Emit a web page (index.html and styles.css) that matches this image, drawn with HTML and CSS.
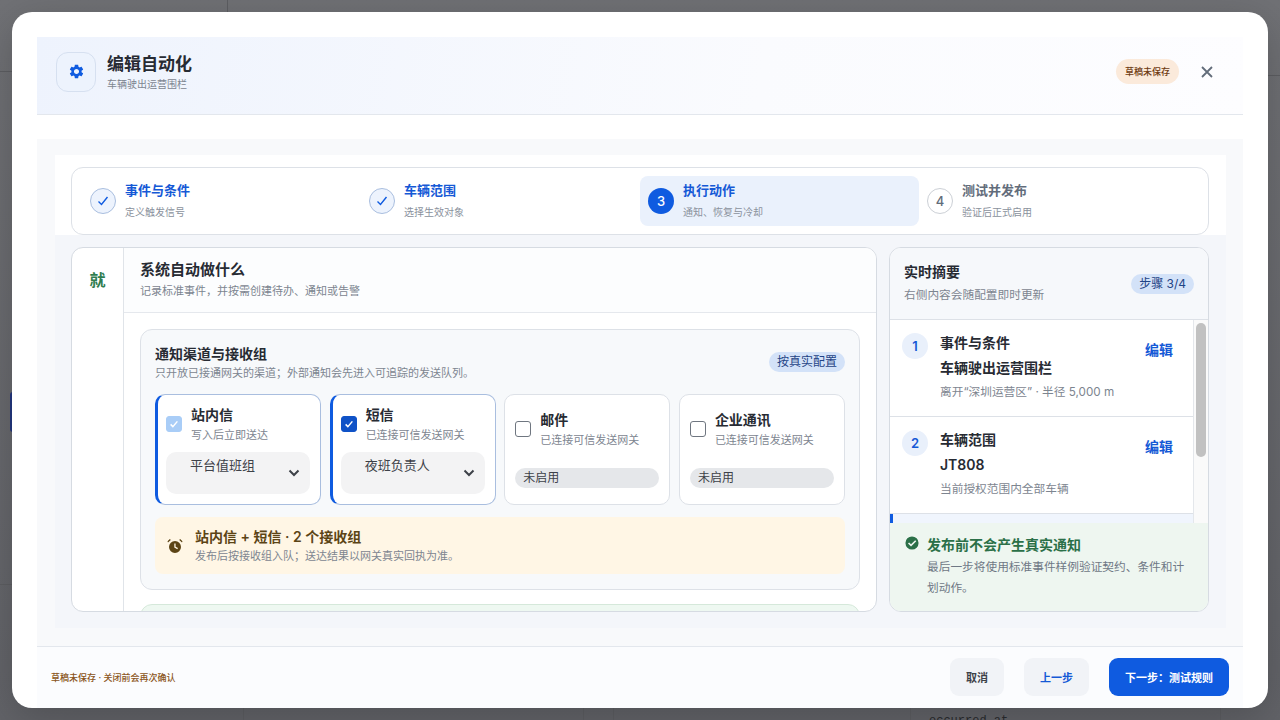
FILE: index.html
```html
<!DOCTYPE html>
<html lang="zh">
<head>
    <meta charset="UTF-8">
    <meta name="viewport" content="width=device-width, initial-scale=1.0">
    <title>编辑自动化</title>
    <link rel="stylesheet" href="styles.css">
</head>
<body>
    <!-- Page behind the dialog -->
    <div class="backdrop">
        <div class="bg-line-v bg-top-227"></div>
        <div class="bg-line-h bg-left-71"></div>
        <div class="bg-line-h bg-left-584"></div>
        <div class="bg-line-h bg-right-75"></div>
        <div class="bg-line-v bg-bottom bg-x-243"></div>
        <div class="bg-line-v bg-bottom bg-x-583"></div>
        <div class="bg-line-v bg-bottom bg-x-613"></div>
        <div class="bg-line-v bg-bottom bg-x-910"></div>
        <div class="bg-line-v bg-bottom bg-x-1220"></div>
        <div class="bg-nav-active"></div>
        <div class="bg-code">occurred_at</div>
    </div>

    <div class="modal">
        <div class="modal-inner">
            <div class="modal-header">
                <div class="header-icon">
                    <svg viewBox="0 0 24 24" width="17" height="17"><path fill="#0f5be0" d="M19.14 12.94c.04-.3.06-.61.06-.94 0-.32-.02-.64-.07-.94l2.03-1.58c.18-.14.23-.41.12-.61l-1.92-3.32c-.12-.22-.37-.29-.59-.22l-2.39.96c-.5-.38-1.03-.7-1.62-.94l-.36-2.54c-.04-.24-.24-.41-.48-.41h-3.84c-.24 0-.43.17-.47.41l-.36 2.54c-.59.24-1.13.57-1.62.94l-2.39-.96c-.22-.08-.47 0-.59.22L2.74 8.87c-.12.21-.08.47.12.61l2.03 1.58c-.05.3-.09.63-.09.94s.02.64.07.94l-2.03 1.58c-.18.14-.23.41-.12.61l1.92 3.32c.12.22.37.29.59.22l2.39-.96c.5.38 1.03.7 1.62.94l.36 2.54c.05.24.24.41.48.41h3.84c.24 0 .44-.17.47-.41l.36-2.54c.59-.24 1.13-.56 1.62-.94l2.39.96c.22.08.47 0 .59-.22l1.92-3.32c.12-.22.07-.47-.12-.61l-2.01-1.58zM12 15.6c-1.98 0-3.6-1.62-3.6-3.6s1.62-3.6 3.6-3.6 3.6 1.62 3.6 3.6-1.62 3.6-3.6 3.6z"/></svg>
                </div>
                <div class="header-text">
                    <h1>编辑自动化</h1>
                    <p>车辆驶出运营围栏</p>
                </div>
                <span class="draft-pill">草稿未保存</span>
                <svg class="close-icon" viewBox="0 0 14 14" width="14" height="14"><path d="M2 2l10 10M12 2L2 12" stroke="#626c7a" stroke-width="1.800" fill="none"/></svg>
            </div>

            <div class="modal-body">
                <div class="body-inner">
                    <div class="steps-wrap">
                        <div class="steps">
                            <div class="step done">
                                <span class="step-dot"><svg viewBox="0 0 16 16" width="16" height="16"><path d="M3.500 8.500l3 3 6-7.500" stroke="#0f5be0" stroke-width="1.400" fill="none"/></svg></span>
                                <div><h4>事件与条件</h4><p>定义触发信号</p></div>
                            </div>
                            <div class="step done">
                                <span class="step-dot"><svg viewBox="0 0 16 16" width="16" height="16"><path d="M3.500 8.500l3 3 6-7.500" stroke="#0f5be0" stroke-width="1.400" fill="none"/></svg></span>
                                <div><h4>车辆范围</h4><p>选择生效对象</p></div>
                            </div>
                            <div class="step active">
                                <span class="step-dot">3</span>
                                <div><h4>执行动作</h4><p>通知、恢复与冷却</p></div>
                            </div>
                            <div class="step todo">
                                <span class="step-dot">4</span>
                                <div><h4>测试并发布</h4><p>验证后正式启用</p></div>
                            </div>
                        </div>
                    </div>

                    <div class="columns">
                        <div class="editor">
                            <div class="editor-tag">就</div>
                            <div class="editor-main">
                                <div class="editor-head">
                                    <h2>系统自动做什么</h2>
                                    <p>记录标准事件，并按需创建待办、通知或告警</p>
                                </div>
                                <div class="editor-content">
                                    <div class="section-card">
                                        <div class="section-head">
                                            <div>
                                                <h3>通知渠道与接收组</h3>
                                                <p>只开放已接通网关的渠道；外部通知会先进入可追踪的发送队列。</p>
                                            </div>
                                            <span class="tag-blue">按真实配置</span>
                                        </div>
                                        <div class="channels">
                                            <div class="channel on">
                                                <div class="channel-top">
                                                    <span class="check locked"><svg viewBox="0 0 16 16" width="12" height="12"><path d="M3.500 8.500l3 3 6-7" stroke="#fff" stroke-width="2" fill="none"/></svg></span>
                                                    <div><h5>站内信</h5><p>写入后立即送达</p></div>
                                                </div>
                                                <div class="select-box">
                                                    <span>平台值班组</span>
                                                    <svg viewBox="0 0 12 8" width="12" height="8"><path d="M1.500 1.500L6 6l4.500-4.500" stroke="#3d4148" stroke-width="2" fill="none"/></svg>
                                                </div>
                                            </div>
                                            <div class="channel on">
                                                <div class="channel-top">
                                                    <span class="check checked"><svg viewBox="0 0 16 16" width="12" height="12"><path d="M3.500 8.500l3 3 6-7" stroke="#fff" stroke-width="2" fill="none"/></svg></span>
                                                    <div><h5>短信</h5><p>已连接可信发送网关</p></div>
                                                </div>
                                                <div class="select-box">
                                                    <span>夜班负责人</span>
                                                    <svg viewBox="0 0 12 8" width="12" height="8"><path d="M1.500 1.500L6 6l4.500-4.500" stroke="#3d4148" stroke-width="2" fill="none"/></svg>
                                                </div>
                                            </div>
                                            <div class="channel">
                                                <div class="channel-top">
                                                    <span class="check"></span>
                                                    <div><h5>邮件</h5><p>已连接可信发送网关</p></div>
                                                </div>
                                                <div class="off-pill">未启用</div>
                                            </div>
                                            <div class="channel">
                                                <div class="channel-top">
                                                    <span class="check"></span>
                                                    <div><h5>企业通讯</h5><p>已连接可信发送网关</p></div>
                                                </div>
                                                <div class="off-pill">未启用</div>
                                            </div>
                                        </div>
                                        <div class="notice">
                                            <svg viewBox="0 0 16 16" width="16" height="16"><path fill="#5c4415" fill-rule="evenodd" d="M8 3a6 6 0 1 1 0 12A6 6 0 0 1 8 3zm-.7 2.500v4l3 1.700.7-1.100-2.400-1.400V5.500z"/><path fill="#5c4415" d="M1 4.600L3.800 2 2.900 1 .5 3.200zM15 4.600L12.200 2l.9-1 2.400 2.200z"/></svg>
                                            <div>
                                                <h4>站内信 + 短信 · 2 个接收组</h4>
                                                <p>发布后按接收组入队；送达结果以网关真实回执为准。</p>
                                            </div>
                                        </div>
                                    </div>
                                    <div class="section-card green"></div>
                                </div>
                            </div>
                        </div>

                        <div class="summary">
                            <div class="summary-head">
                                <div class="summary-title">
                                    <h3>实时摘要</h3>
                                    <p>右侧内容会随配置即时更新</p>
                                </div>
                                <span class="tag-blue">步骤 3/4</span>
                            </div>
                            <div class="summary-list">
                                <div class="summary-rows">
                                    <div class="summary-row">
                                        <span class="num">1</span>
                                        <div class="row-text">
                                            <h4>事件与条件</h4>
                                            <strong>车辆驶出运营围栏</strong>
                                            <p>离开“深圳运营区” · 半径 5,000 m</p>
                                        </div>
                                        <a class="edit-link">编辑</a>
                                    </div>
                                    <div class="summary-row">
                                        <span class="num">2</span>
                                        <div class="row-text">
                                            <h4>车辆范围</h4>
                                            <strong>JT808</strong>
                                            <p>当前授权范围内全部车辆</p>
                                        </div>
                                        <a class="edit-link">编辑</a>
                                    </div>
                                    <div class="summary-row current"></div>
                                </div>
                                <div class="scrollbar"><div class="scroll-thumb"></div></div>
                            </div>
                            <div class="summary-foot">
                                <svg viewBox="0 0 16 16" width="16" height="16"><path fill="#2b7048" fill-rule="evenodd" d="M8 .5a7.500 7.500 0 1 1 0 15 7.500 7.500 0 0 1 0-15zm3.600 4.300L6.900 9.500 4.700 7.300 3.400 8.600l3.500 3.500 6-6z"/></svg>
                                <div>
                                    <h4>发布前不会产生真实通知</h4>
                                    <p>最后一步将使用标准事件样例验证契约、条件和计划动作。</p>
                                </div>
                            </div>
                        </div>
                    </div>
                </div>
            </div>

            <div class="modal-footer">
                <span class="footer-note">草稿未保存 · 关闭前会再次确认</span>
                <div class="footer-buttons">
                    <button class="btn">取消</button>
                    <button class="btn btn-back">上一步</button>
                    <button class="btn btn-next">下一步：测试规则</button>
                </div>
            </div>
        </div>
    </div>
</body>
</html>
```
FILE: styles.css
```css
* {
    box-sizing: border-box;
}
html, body {
    margin: 0;
    height: 100%;
    overflow: hidden;
}
body {
    font-family: Inter, "Noto Sans CJK SC", sans-serif;
    background-color: #6c6d71;
    color: #272b33;
}
h1, h2, h3, h4, h5, p {
    margin: 0;
}
.backdrop {
    position: absolute;
    inset: 0;
    background: linear-gradient(#707175, #626368);
}
.bg-line-v {
    position: absolute;
    width: 1px;
    background-color: #5d5e62;
}
.bg-line-h {
    position: absolute;
    height: 1px;
    background-color: #5d5e62;
}
.bg-top-227 {
    left: 227px;
    top: 0;
    height: 12px;
}
.bg-left-71 {
    left: 0;
    width: 12px;
    top: 71px;
}
.bg-left-584 {
    left: 0;
    width: 12px;
    top: 584px;
}
.bg-right-75 {
    right: 0;
    width: 12px;
    top: 75px;
}
.bg-bottom {
    top: 708px;
    height: 12px;
}
.bg-x-243 { left: 243px; }
.bg-x-583 { left: 583px; }
.bg-x-613 { left: 613px; }
.bg-x-910 { left: 910px; }
.bg-x-1220 { left: 1220px; }
.bg-nav-active {
    position: absolute;
    left: 10px;
    top: 392px;
    width: 6px;
    height: 40px;
    border-radius: 4px;
    background-color: #23377f;
}
.bg-code {
    position: absolute;
    left: 929px;
    top: 714px;
    font-family: "Liberation Mono", monospace;
    font-size: 12px;
    color: #2a2b2e;
}

/* dialog */
.modal {
    position: absolute;
    left: 12px;
    top: 12px;
    width: 1256px;
    height: 696px;
    padding: 25px 25px 0;
    background-color: #fff;
    border-radius: 20px;
    box-shadow: 0 10px 40px rgba(0, 0, 0, 0.2);
}
.modal-inner {
    display: flex;
    flex-direction: column;
    height: 100%;
}
.modal-header {
    display: flex;
    align-items: center;
    height: 78px;
    padding: 0 29px 8px 19px;
    background: linear-gradient(100deg, #eef3fd 0%, #fafbfe 60%, #fdfdff 100%);
    border-bottom: 1px solid #e3e7ed;
}
.header-icon {
    display: flex;
    align-items: center;
    justify-content: center;
    width: 40px;
    height: 40px;
    border: 1px solid #d6e0f0;
    border-radius: 12px;
    background-color: #edf3fd;
}
.header-text {
    flex: 1;
    margin-left: 11px;
}
.header-text h1 {
    font-size: 17px;
    line-height: 24px;
    font-weight: 600;
    color: #272b33;
}
.header-text p {
    margin-top: 1px;
    font-size: 10px;
    line-height: 14px;
    color: #7d8590;
}
.draft-pill {
    padding: 0 9px;
    height: 25px;
    line-height: 25px;
    border-radius: 13px;
    font-size: 9px;
    font-weight: 500;
    color: #6e3a12;
    background-color: #fbeadb;
}
.close-icon {
    margin-left: 21px;
}
.modal-body {
    height: 507px;
    margin-top: 24px;
    padding: 16px 17px 18px 18px;
    background-color: #f8f9fb;
}
.body-inner {
    display: flex;
    flex-direction: column;
    height: 100%;
    background-color: #f4f6fa;
}
.steps-wrap {
    margin-bottom: 12px;
    padding: 12px 17px 0 16px;
    background-color: #fff;
}
.steps {
    display: grid;
    grid-template-columns: repeat(4, 1fr);
    height: 68px;
    padding: 8px 10px;
    background-color: #fff;
    border: 1px solid #dde1e7;
    border-radius: 12px;
}
.step {
    display: flex;
    align-items: center;
    gap: 9px;
    padding: 0 8px;
    border-radius: 8px;
}
.step h4 {
    margin-top: -2px;
    font-size: 13px;
    line-height: 18px;
    font-weight: 600;
    color: #1559d6;
}
.step p {
    margin-top: 6px;
    font-size: 10px;
    line-height: 14px;
    color: #8a919c;
}
.step-dot {
    display: flex;
    align-items: center;
    justify-content: center;
    flex: none;
    width: 26px;
    height: 26px;
    border-radius: 50%;
    font-size: 13px;
    font-weight: 500;
}
.step.done .step-dot {
    background-color: #edf3fd;
    border: 1px solid #a9bedf;
}
.step.active {
    background-color: #eaf1fc;
}
.step.active .step-dot {
    color: #fff;
    background-color: #0f5be0;
}
.step.todo .step-dot {
    color: #626c7a;
    background-color: #fff;
    border: 1px solid #ccd0d6;
}
.step.todo h4 {
    color: #626c7a;
}
.columns {
    display: flex;
    flex: 1;
    gap: 12px;
    min-height: 0;
    padding-left: 16px;
}

/* left editor */
.editor {
    display: flex;
    flex: none;
    width: 806px;
    height: 365px;
    overflow: hidden;
    background-color: #fff;
    border: 1px solid #d6dbe2;
    border-radius: 12px;
}
.editor-tag {
    flex: none;
    width: 52px;
    padding-top: 20px;
    text-align: center;
    font-size: 16px;
    line-height: 24px;
    font-weight: 600;
    color: #2f7d4f;
    border-right: 1px solid #e0e4e9;
}
.editor-main {
    flex: 1;
    min-width: 0;
}
.editor-head {
    height: 65px;
    padding: 12px 16px 0;
    border-bottom: 1px solid #e5e8ed;
    background-color: #fcfdfe;
}
.editor-head h2 {
    font-size: 15px;
    line-height: 20px;
    font-weight: 600;
}
.editor-head p {
    margin-top: 4px;
    font-size: 11px;
    line-height: 15px;
    color: #7d8590;
}
.editor-content {
    padding: 16px;
}
.section-card {
    height: 261px;
    padding: 14px 14px;
    background-color: #f7f9fb;
    border: 1px solid #dde1e7;
    border-radius: 12px;
}
.section-card.green {
    margin-top: 14px;
    height: 40px;
    background-color: #eef8f1;
    border-color: #d5e8da;
}
.section-head {
    display: flex;
    align-items: center;
    justify-content: space-between;
}
.section-head h3 {
    font-size: 14px;
    line-height: 20px;
    font-weight: 600;
}
.section-head p {
    margin-top: 2px;
    font-size: 11px;
    line-height: 14px;
    color: #7d8590;
}
.tag-blue {
    flex: none;
    height: 20px;
    padding: 0 8px;
    line-height: 20px;
    border-radius: 10px;
    font-size: 12px;
    color: #1f4486;
    background-color: #d3e2f8;
}
.channels {
    display: grid;
    grid-template-columns: repeat(4, 1fr);
    gap: 8.500px;
    margin-top: 14px;
}
.channel {
    height: 111px;
    padding: 10px 10px 0;
    background-color: #fff;
    border: 1px solid #dde1e7;
    border-radius: 10px;
}
.channel.on {
    padding-left: 8px;
    border-color: #a9bedf;
    border-left: 3px solid #0f5be0;
}
.channel-top {
    display: flex;
    align-items: center;
    gap: 9px;
    height: 38px;
}
.channel:not(.on) .channel-top {
    margin-top: 5px;
}
.channel h5 {
    font-size: 14px;
    line-height: 20px;
    font-weight: 600;
}
.channel p {
    margin-top: 3px;
    font-size: 11px;
    line-height: 15px;
    color: #7d8590;
}
.check {
    display: flex;
    align-items: center;
    justify-content: center;
    flex: none;
    width: 16px;
    height: 16px;
    background-color: #fff;
    border: 1px solid #6f7680;
    border-radius: 3px;
}
.check.checked {
    background-color: #0f52c7;
    border-color: #0f52c7;
}
.check.locked {
    background-color: #a9cdf7;
    border-color: #a9cdf7;
}
.select-box {
    display: flex;
    justify-content: space-between;
    height: 42px;
    margin-top: 9px;
    padding: 4px 10px 0 24px;
    background-color: #f3f3f4;
    border-radius: 10px;
    font-size: 13px;
    line-height: 18px;
    color: #3d4148;
}
.select-box svg {
    margin-top: 13px;
}
.off-pill {
    height: 20px;
    margin-top: 20px;
    padding-left: 8px;
    line-height: 20px;
    font-size: 12px;
    color: #3d4148;
    background-color: #e5e7ea;
    border-radius: 10px;
}
.notice {
    display: flex;
    align-items: center;
    gap: 12px;
    height: 57px;
    margin-top: 12px;
    padding: 0 12px;
    background-color: #fff6e5;
    border-radius: 8px;
}
.notice h4 {
    font-size: 14px;
    line-height: 20px;
    font-weight: 600;
    color: #5c4415;
}
.notice p {
    margin-top: 2px;
    font-size: 11px;
    line-height: 15px;
    color: #7d8590;
}

/* right summary */
.summary {
    display: flex;
    flex-direction: column;
    flex: none;
    width: 320px;
    height: 365px;
    overflow: hidden;
    background-color: #fff;
    border: 1px solid #d6dbe2;
    border-radius: 12px;
}
.summary-head {
    display: flex;
    align-items: center;
    justify-content: space-between;
    flex: none;
    height: 72px;
    padding: 0 14px;
    background-color: #f6f8fb;
    border-bottom: 1px solid #dde1e7;
}
.summary-title {
    padding-bottom: 3px;
}
.summary-head h3 {
    font-size: 14px;
    line-height: 20px;
    font-weight: 600;
}
.summary-head p {
    margin-top: 5px;
    font-size: 11.700px;
    line-height: 16px;
    color: #7d8590;
}
.summary-list {
    display: flex;
    flex: 1;
    min-height: 0;
    overflow: hidden;
}
.summary-rows {
    flex: 1;
    min-width: 0;
}
.summary-row {
    display: flex;
    height: 97px;
    padding: 13px 12px;
    border-bottom: 1px solid #dde1e7;
}
.summary-row.current {
    height: 12px;
    padding: 0;
    background-color: #f0f5fd;
    border-bottom: 0;
    border-left: 3px solid #0f5be0;
}
.num {
    display: flex;
    align-items: center;
    justify-content: center;
    flex: none;
    width: 26px;
    height: 26px;
    border-radius: 50%;
    font-size: 13px;
    font-weight: 600;
    color: #1559d6;
    background-color: #e9f0fb;
}
.row-text {
    flex: 1;
    margin-left: 12px;
}
.row-text h4 {
    font-size: 14px;
    line-height: 20px;
    font-weight: 600;
}
.row-text strong {
    display: block;
    margin-top: 5px;
    font-size: 14px;
    line-height: 20px;
    font-weight: 600;
}
.row-text p {
    margin-top: 6px;
    font-size: 11.700px;
    line-height: 16px;
    color: #7d8590;
}
.edit-link {
    margin: 7px 8px 0 0;
    font-size: 14px;
    line-height: 20px;
    font-weight: 600;
    color: #1559d6;
}
.scrollbar {
    flex: none;
    width: 15px;
    padding: 3px 2px;
    background-color: #fafafa;
    border-left: 1px solid #e4e7eb;
}
.scroll-thumb {
    height: 134px;
    background-color: #c1c1c1;
    border-radius: 5px;
}
.summary-foot {
    display: flex;
    flex: none;
    gap: 8px;
    height: 88px;
    padding: 12px 15px;
    background-color: #eef6f0;
}
.summary-foot h4 {
    font-size: 14px;
    line-height: 20px;
    font-weight: 600;
    color: #2b7048;
}
.summary-foot p {
    margin-top: 2px;
    font-size: 11.700px;
    line-height: 21px;
    color: #6f7885;
}

/* footer */
.modal-footer {
    display: flex;
    align-items: center;
    justify-content: space-between;
    flex: 1;
    padding: 0 14px 1px;
    background-color: #fbfcfe;
    border-top: 1px solid #e3e7ed;
}
.footer-note {
    font-size: 9px;
    font-weight: 500;
    color: #8a5420;
}
.footer-buttons {
    display: flex;
    gap: 20px;
}
.btn {
    height: 38px;
    padding: 0 16px;
    font-family: inherit;
    font-size: 11px;
    font-weight: 600;
    color: #3d4148;
    background-color: #f1f3f7;
    border: none;
    border-radius: 9px;
}
.btn-back {
    color: #1559d6;
}
.btn-next {
    color: #fff;
    background-color: #0f5be0;
}
```
